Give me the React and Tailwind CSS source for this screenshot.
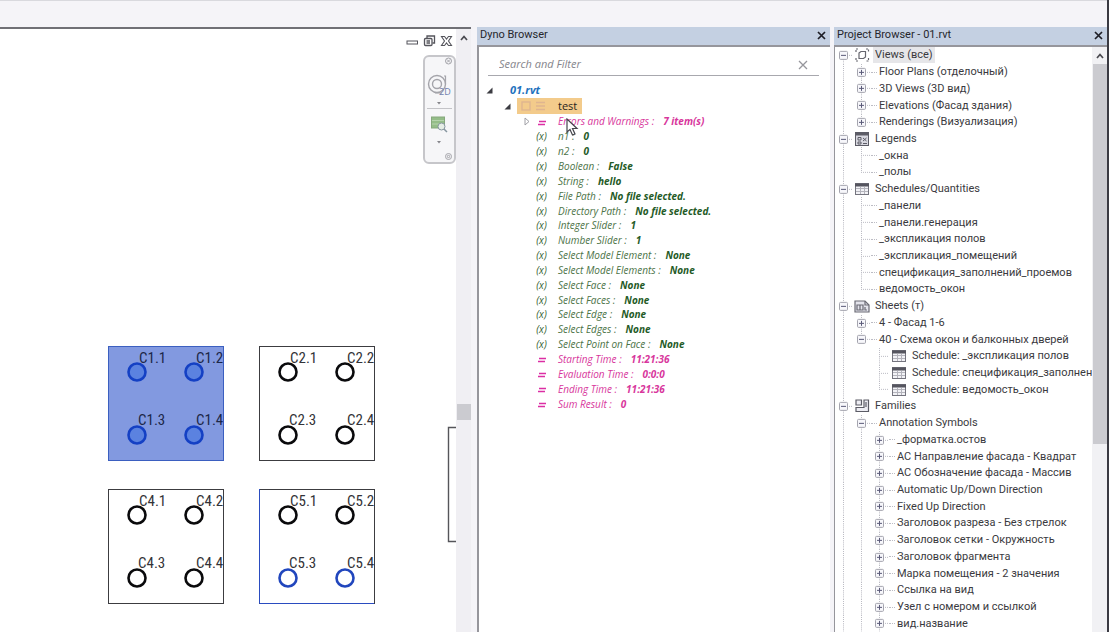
import React from "react";

const FONT = "font-['Open_Sans','Noto_Sans',sans-serif]";

/* ---------- Drawing canvas ---------- */

const POINTS = [
  { cx: 29, cy: 26, tx: 31, ty: 17 },
  { cx: 86, cy: 26, tx: 88, ty: 17 },
  { cx: 29, cy: 89, tx: 30, ty: 79 },
  { cx: 86, cy: 89, tx: 88, ty: 79 },
];

const ROOMS = [
  { id: 1, x: 108, y: 346, selected: true, blue: [] },
  { id: 2, x: 259, y: 346, selected: false, blue: [] },
  { id: 4, x: 108, y: 489, selected: false, blue: [] },
  { id: 5, x: 259, y: 489, selected: false, blue: [2, 3] },
];

function Room({ room }) {
  const outline = room.selected ? "#3b5fc0" : "#3c3c40";
  return (
    <g transform={`translate(${room.x} ${room.y})`}>
      <rect x="0.5" y="0.5" width="115" height="114" fill={room.selected ? "#8299e0" : "#fff"} stroke={outline} />
      {room.blue.length > 0 && <path d="M0.5 0V114.500H115" fill="none" stroke="#2a4cc0" />}
      {POINTS.map((p, i) => (
        <g key={i}>
          <text x={p.tx} y={p.ty} fontSize="15" fill={room.selected ? "#1c2748" : "#333338"}>
            {`C${room.id}.${i + 1}`}
          </text>
          <circle
            cx={p.cx}
            cy={p.cy}
            r="8.500"
            fill={room.selected ? "#5b82e0" : "#fff"}
            stroke={room.selected ? "#1440c4" : room.blue.includes(i) ? "#2146bd" : "#0a0a0c"}
            strokeWidth="2.600"
          />
        </g>
      ))}
    </g>
  );
}

function Canvas() {
  return (
    <svg className="h-full w-full font-['Liberation_Sans_Narrow','Roboto_Condensed','Liberation_Sans',sans-serif]">
      <g transform="translate(0 -29)">
        {ROOMS.map((r) => (
          <Room key={r.id} room={r} />
        ))}
        <path d="M457 427.500H448.500V541.500H457" fill="none" stroke="#55555a" strokeWidth="1.400" />
      </g>
    </svg>
  );
}

function WindowButtons() {
  return (
    <div className="absolute top-[6px] right-[3px] flex gap-1 text-[#55555c]">
      <button aria-label="Minimize">
        <svg width="13" height="12" fill="none" stroke="currentColor">
          <rect x="1" y="6" width="10.500" height="3" />
        </svg>
      </button>
      <button aria-label="Restore">
        <svg width="13" height="12" fill="none" stroke="currentColor" strokeWidth="1.300">
          <path d="M4 3V1H11.500V8H9.500" />
          <rect x="1.500" y="3.500" width="7.500" height="7" rx="1" />
          <path d="M3.500 6H7M3.500 8H7" />
        </svg>
      </button>
      <button aria-label="Close drawing">
        <svg width="13" height="12" fill="none" stroke="currentColor" strokeWidth="1.100">
          <path d="M1.500 1.500H4.500L6.500 4L8.500 1.500H11.500L8.500 6L11.500 10.500H8.500L6.500 8L4.500 10.500H1.500L4.500 6Z" />
        </svg>
      </button>
    </div>
  );
}

function NavBar() {
  return (
    <div className="absolute top-[26px] right-0 flex h-[109px] w-[33px] flex-col items-center rounded-md border-2 border-[#c6c6ca] bg-[#f6f6f8]">
      <svg width="29" height="105" viewBox="0 0 29 105" fill="none" stroke="#a4a4aa">
        <circle cx="23.500" cy="4" r="3" />
        <path d="M22 2.500L25 5.500M25 2.500L22 5.500" />
        <circle cx="12" cy="27" r="8.500" strokeWidth="1.400" />
        <circle cx="12" cy="27" r="4.500" strokeWidth="1.400" />
        <path d="M19 19H20.500V27M10 36H17" strokeWidth="1.200" />
        <path d="M12 45L16 45L14 47.500Z" fill="#85858a" stroke="none" />
        <path d="M2 51.500H27" stroke="#c4c4c8" />
        <rect x="6.500" y="60" width="13" height="11" fill="#94bd88" stroke="#86a87d" />
        <path d="M7 63.500H19M7 67H19" stroke="#b5d3ac" />
        <circle cx="16.500" cy="69.500" r="3.500" fill="#e6eee6" stroke="#8796a0" />
        <path d="M19 72L22 75" stroke="#8796a0" strokeWidth="1.500" />
        <path d="M12 84L16 84L14 86.500Z" fill="#85858a" stroke="none" />
        <circle cx="23.500" cy="99.500" r="3" />
        <circle cx="23.500" cy="99.500" r="1.200" />
        <text x="14" y="38" fontSize="9" fill="#6f7fae" stroke="none">2D</text>
      </svg>
    </div>
  );
}

function ArrowUp() {
  return (
    <svg width="8" height="6" fill="none" stroke="#4a4a50" strokeWidth="1.700">
      <path d="M1 5L4 1.500L7 5" />
    </svg>
  );
}

/* ---------- Shared panel header ---------- */

function PanelHeader({ title }) {
  return (
    <header className="flex h-[18px] shrink-0 items-center justify-between bg-[#c4d0e2] pr-1 pb-[2px] pl-[3px]">
      <h2 className="font-['Roboto','Noto_Sans',sans-serif] text-[11px] leading-4 whitespace-nowrap text-[#26262c]">{title}</h2>
      <button aria-label={`Close ${title}`}>
        <svg width="9" height="9" fill="none" stroke="#1e1e26" strokeWidth="1.700">
          <path d="M1 1L8 8M8 1L1 8" />
        </svg>
      </button>
    </header>
  );
}

/* ---------- Dyno browser ---------- */

const INPUTS = [
  ["n1", "0"],
  ["n2", "0"],
  ["Boolean", "False"],
  ["String", "hello"],
  ["File Path", "No file selected."],
  ["Directory Path", "No file selected."],
  ["Integer Slider", "1"],
  ["Number Slider", "1"],
  ["Select Model Element", "None"],
  ["Select Model Elements", "None"],
  ["Select Face", "None"],
  ["Select Faces", "None"],
  ["Select Edge", "None"],
  ["Select Edges", "None"],
  ["Select Point on Face", "None"],
];

const OUTPUTS = [
  ["Starting Time", "11:21:36"],
  ["Evaluation Time", "0:0:0"],
  ["Ending Time", "11:21:36"],
  ["Sum Result", "0"],
];

function Corner() {
  return (
    <svg width="7" height="7">
      <path d="M6.500 0.500V6.500H0.500Z" fill="#3c3c42" />
    </svg>
  );
}

function Item({ name, value, output, expandable }) {
  return (
    <li className={`flex min-h-0 items-center text-[10px] leading-[14px] italic whitespace-nowrap ${output ? "text-[#d8369c]" : "text-[#4c7347]"}`}>
      <span className="flex w-[51px] shrink-0 justify-end">
        {expandable && (
          <button aria-label="Expand">
            <svg width="6" height="9" fill="none" stroke="#a0a0a6">
              <path d="M1 1L5 4.500L1 8Z" />
            </svg>
          </button>
        )}
      </span>
      <span className={`w-[23px] shrink-0 text-center ${output ? "font-bold" : "text-[#356234]"}`}>
        {output ? (
          <svg className="inline" width="8" height="6" stroke="#dc2ea4" strokeWidth="1.600">
            <path d="M1 1.500H8M0 4.500H7" />
          </svg>
        ) : (
          "(x)"
        )}
      </span>
      <span className="pl-[5px]">{name} :</span>
      <span className={`pl-[9px] font-bold ${output ? "" : "text-[#245a26]"}`}>{value}</span>
    </li>
  );
}

function DynoBrowser() {
  return (
    <section className="relative flex w-[353px] shrink-0 flex-col">
      <PanelHeader title="Dyno Browser" />
      <div className="flex min-h-0 flex-1 flex-col border-t-2 border-l-2 border-[#96969c] bg-white">
        <label className="mt-[7px] mr-[11px] ml-[9px] flex h-[22px] items-center border-b border-[#a8a8ae] pr-[11px] pl-[11px]">
          <input
            type="text"
            aria-label="Search and Filter"
            placeholder="Search and Filter"
            className="min-w-0 flex-1 bg-transparent text-[11px] italic outline-none placeholder:text-[#85858c]"
          />
          <svg width="10" height="10" fill="none" stroke="#96969c" strokeWidth="1.300">
            <path d="M1 1L9 9M9 1L1 9" />
          </svg>
        </label>
        <div className="mt-[6px] flex h-4 items-center pl-[7px]">
          <Corner />
          <span className="pl-[17px] text-[11px] font-bold text-[#2271bd] italic">01.rvt</span>
        </div>
        <div className="flex h-4 items-center pl-[25px]">
          <Corner />
          <span className="ml-[6px] flex h-4 w-[65px] items-center bg-[#f3cb8b] pl-[4px] text-[11px] text-[#2a2620]">
            <svg width="37" height="12" fill="none" stroke="#dfb590" strokeWidth="1.400">
              <rect x="1" y="2" width="8" height="8" />
              <path d="M15 2.500H24M15 6H24M15 9.500H24" />
            </svg>
            test
          </span>
        </div>
        <ul className="grid h-[297px] auto-rows-fr">
          <Item name="Errors and Warnings" value="7 item(s)" output expandable />
          {INPUTS.map(([n, v]) => (
            <Item key={n} name={n} value={v} />
          ))}
          {OUTPUTS.map(([n, v]) => (
            <Item key={n} name={n} value={v} output />
          ))}
        </ul>
      </div>
      <svg className="absolute top-[91px] left-[89px]" width="13" height="19">
        <path d="M1 1V14L4 11.500L6.500 17L9 16L6.500 10.500H11Z" fill="#fff" stroke="#45454c" strokeWidth="1.200" />
      </svg>
    </section>
  );
}

/* ---------- Project browser ---------- */

/* Guides, one letter per 18px column:
   space = empty, | = line, L = last leaf, T = leaf, + = closed node,
   p = closed node that ends its branch, - = open node,
   e = open node that ends its branch, f = first node */
const TREE = [
  ["f", "Views (все)", "views"],
  ["|+", "Floor Plans (отделочный)"],
  ["|+", "3D Views (3D вид)"],
  ["|+", "Elevations (Фасад здания)"],
  ["|p", "Renderings (Визуализация)"],
  ["-", "Legends", "legend"],
  ["|T", "_окна"],
  ["|L", "_полы"],
  ["-", "Schedules/Quantities", "table"],
  ["|T", "_панели"],
  ["|T", "_панели.генерация"],
  ["|T", "_экспликация полов"],
  ["|T", "_экспликация_помещений"],
  ["|T", "спецификация_заполнений_проемов"],
  ["|L", "ведомость_окон"],
  ["-", "Sheets (т)", "sheet"],
  ["|+", "4 - Фасад 1-6"],
  ["|e", "40 - Схема окон и балконных дверей"],
  ["| T", "Schedule: _экспликация полов", "table"],
  ["| T", "Schedule: спецификация_заполнений_проемов", "table"],
  ["| L", "Schedule: ведомость_окон", "table"],
  ["-", "Families", "family"],
  ["|-", "Annotation Symbols"],
  ["||+", "_форматка.остов"],
  ["||+", "АС Направление фасада - Квадрат"],
  ["||+", "АС Обозначение фасада - Массив"],
  ["||+", "Automatic Up/Down Direction"],
  ["||+", "Fixed Up Direction"],
  ["||+", "Заголовок разреза - Без стрелок"],
  ["||+", "Заголовок сетки - Окружность"],
  ["||+", "Заголовок фрагмента"],
  ["||+", "Марка помещения - 2 значения"],
  ["||+", "Ссылка на вид"],
  ["||+", "Узел с номером и ссылкой"],
  ["||+", "вид.название"],
];

function Guide({ kind }) {
  const node = "+-pef".includes(kind);
  const top = kind !== " " && kind !== "f";
  const bottom = "|T+-f".includes(kind);
  const svg = (
    <svg className="h-full w-[18px] overflow-visible" fill="none" stroke="#bcbcc4">
      {top && <line x1="8.500" x2="8.500" y1="0" y2="50%" strokeDasharray="1 1" />}
      {bottom && <line x1="8.500" x2="8.500" y1="50%" y2="100%" strokeDasharray="1 1" />}
      {kind !== "|" && kind !== " " && <line x1="8" x2="18" y1="50%" y2="50%" strokeDasharray="1 1" />}
      {node && (
        <svg x="4" y="50%" width="9" height="9" className="overflow-visible">
          <rect x="0.500" y="-4" width="8" height="8" rx="1" fill="#f7f7fb" stroke="#a4a4ae" />
          <path d={kind === "+" || kind === "p" ? "M2 0H7M4.500 -2.500V2.500" : "M2 0H7"} stroke="#5a5a78" />
        </svg>
      )}
    </svg>
  );
  return node ? (
    <button className="h-full shrink-0" aria-label={kind === "+" || kind === "p" ? "Expand" : "Collapse"}>
      {svg}
    </button>
  ) : (
    <span className="h-full shrink-0">{svg}</span>
  );
}

function TreeIcon({ kind }) {
  if (kind === "views")
    return (
      <svg width="16" height="14" fill="none" stroke="#66666e" strokeWidth="1.200">
        <path d="M4 1H2V4M12 1H14.500V4M2 10V13H4M14.500 10V13H12" strokeDasharray="2 1" />
        <path d="M5 5L7 3.500H11.500V9L9.500 10.500H5Z" />
      </svg>
    );
  if (kind === "legend")
    return (
      <svg width="16" height="14" fill="none" stroke="#5c5c66">
        <rect x="1.500" y="0.500" width="13" height="13" fill="#d8d8e0" />
        <path d="M1.500 2H14.500" strokeWidth="3" />
        <path d="M4 5.500H7V8H4ZM4 10H7V12H4ZM9 6L12.500 9M12.500 6L9 9M9 11.500H13" />
      </svg>
    );
  if (kind === "sheet")
    return (
      <svg width="16" height="13" fill="none" stroke="#6a6a74" strokeWidth="1.200">
        <path d="M1 1H11L15 5V12H1Z" fill="#e4e4ec" />
        <path d="M11 1V5H15M3 5H9V10H3ZM6 5V10M11 7V10H13" />
      </svg>
    );
  if (kind === "family")
    return (
      <svg width="16" height="14" fill="none" stroke="#5c5c66" strokeWidth="1.200">
        <path d="M2 1H7.500V6H2ZM10 1H14.500V12.500H2V8.500H10Z" fill="#eeeef4" />
        <path d="M12 3V8" />
      </svg>
    );
  return (
    <svg width="16" height="12" fill="none" stroke="#74747e">
      <rect x="1.500" y="0.500" width="13" height="11" fill="#f2f2f6" />
      <path d="M1 2H15" stroke="#55555f" strokeWidth="3" />
      <path d="M2 5.500H14M2 8.500H14M6.500 4V11M10.500 4V11" stroke="#b4b4bc" />
    </svg>
  );
}

function TreeRow({ guides, label, icon }) {
  const kinds = guides.split("");
  return (
    <li className="flex min-h-0 flex-1 items-center whitespace-nowrap">
      {kinds.map((k, i) => (
        <Guide key={i} kind={k} />
      ))}
      {icon ? (
        <span className={`flex shrink-0 ${kinds.length > 1 ? "pl-[2px]" : "pl-px"}`}>
          <TreeIcon kind={icon} />
        </span>
      ) : (
        <span className="w-[6px] shrink-0 border-t border-dotted border-[#bcbcc4]" />
      )}
      <span className={`px-[2px] ${icon ? "ml-[3px]" : ""} ${icon === "views" ? "bg-[#e6e6e9]" : ""}`}>{label}</span>
    </li>
  );
}

function ProjectBrowser() {
  return (
    <section className="flex w-[273px] shrink-0 flex-col">
      <PanelHeader title="Project Browser - 01.rvt" />
      <div className="flex min-h-0 flex-1 border-t-2 border-l border-[#96969c] bg-white">
        <ul className="flex min-w-0 flex-1 flex-col overflow-hidden font-['Roboto','Noto_Sans',sans-serif] text-[11px] leading-4 text-[#3a3a40]">
          {TREE.map(([g, label, icon]) => (
            <TreeRow key={label + g} guides={g} label={label} icon={icon} />
          ))}
        </ul>
        <div className="flex w-[15px] shrink-0 flex-col items-center bg-[#f1f1f4]">
          <span className="flex h-[17px] shrink-0 items-center">
            <ArrowUp />
          </span>
          <span className="h-[65%] w-[14px] bg-[#cbcbd0]" />
        </div>
      </div>
    </section>
  );
}

export default function App() {
  return (
    <div className={`flex h-screen overflow-hidden bg-[#f5f4f8] ${FONT}`}>
      <div className="flex min-w-0 flex-1 flex-col">
        <div className="h-[27px] shrink-0 border-t border-[#d9d9de]" />
        <main className="flex min-h-0 flex-1">
          <div className="mr-[6px] flex min-w-0 flex-1 border-t-2 border-[#707076]">
            <div className="relative min-w-0 flex-1 overflow-hidden bg-white">
              <Canvas />
              <WindowButtons />
              <NavBar />
            </div>
            <div className="flex w-[15px] shrink-0 flex-col items-center bg-[#f0eff3]">
              <span className="flex h-[17px] shrink-0 items-center">
                <ArrowUp />
              </span>
              <span className="grow-[64]" />
              <span className="h-4 w-[14px] shrink-0 bg-[#cbcbd0]" />
              <span className="grow-[38]" />
            </div>
          </div>
          <DynoBrowser />
          <div className="w-[4px] shrink-0" />
          <ProjectBrowser />
        </main>
      </div>
      <div className="w-[2px] shrink-0 bg-[#3a3a42]" />
    </div>
  );
}
